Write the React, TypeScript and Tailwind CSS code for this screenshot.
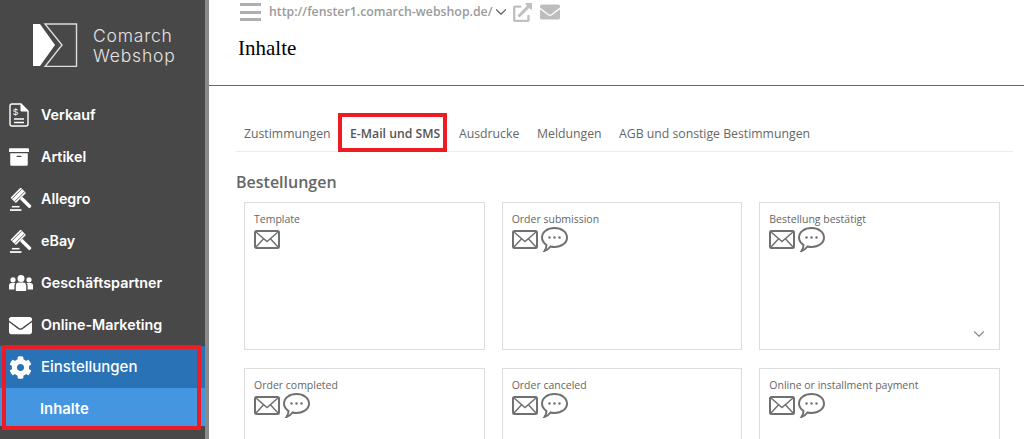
import React from "react";
import { FaArchive, FaCog, FaEnvelope, FaExternalLinkAlt } from "react-icons/fa";
import { ChevronDown } from "lucide-react";

const ReceiptIcon = () => (
  <svg width="20" height="24" viewBox="0 0 20 24" fill="none" stroke="white">
    <path d="M3 1 H12 L19 8 V21 Q19 23 17 23 H3 Q1 23 1 21 V3 Q1 1 3 1Z" strokeWidth="1.4" />
    <path d="M12 1 V8 H19" fill="white" strokeWidth="1" />
    <path d="M5 16 H15 M5 19.5 H15" strokeWidth="1.6" />
    <text x="4" y="12" fontSize="9" fill="white" stroke="none" fontFamily="Liberation Sans, sans-serif">$</text>
  </svg>
);

const GavelIcon = () => (
  <svg width="23" height="23" viewBox="0 0 24 24" fill="white">
    <g transform="rotate(45 10 8)">
      <rect x="5.5" y="0.5" width="8" height="15" rx="0.8" />
      <rect x="13.5" y="6" width="14" height="3.6" rx="1.2" />
      <path d="M7.5 1 V15 M11.5 1 V15" stroke="#484848" strokeWidth="0.8" />
    </g>
    <path d="M1 23 H13" stroke="white" strokeWidth="1.8" />
    <path d="M3 19.5 H11" stroke="white" strokeWidth="1.6" />
  </svg>
);

const UsersIcon = () => (
  <svg width="24" height="16" viewBox="0 0 24 16" fill="white">
    <circle cx="12" cy="3.5" r="3.5" />
    <path d="M6.8 16 V11 Q6.8 7.6 10 7.6 H14 Q17.2 7.6 17.2 11 V16Z" />
    <circle cx="4" cy="4.8" r="2.6" />
    <circle cx="20" cy="4.8" r="2.6" />
    <path d="M0 14.5 V10.5 Q0 8 2.6 8 H6.4 Q5.4 9.2 5.4 11 V14.5Z" />
    <path d="M24 14.5 V10.5 Q24 8 21.4 8 H17.6 Q18.6 9.2 18.6 11 V14.5Z" />
  </svg>
);

const Envelope = () => (
  <svg width="26" height="19" viewBox="0 0 26 19" fill="none" stroke="#707070" strokeWidth="1.5">
    <rect x="1" y="1" width="24" height="17" rx="1.5" strokeWidth="2" />
    <path d="M2 2 L13 11.5 L24 2 M2 17 L9.8 8.6 M24 17 L16.2 8.6" />
  </svg>
);

const Bubble = () => (
  <svg width="27" height="25" viewBox="0 0 27 25" fill="none" stroke="#707070" strokeWidth="2" className="-mt-[3px]">
    <path d="M13.5 1 C20.5 1 26 5 26 10.5 C26 16 20.5 20 13.5 20 C12 20 10.5 19.8 9.5 19.5 C8 21.5 6 23.5 3.5 24 C5 22 5.5 20 5.5 18 C2.8 16 1 13.5 1 10.5 C1 5 6.5 1 13.5 1Z" />
    <circle cx="8.5" cy="10.5" r="1.2" fill="#707070" stroke="none" />
    <circle cx="13.5" cy="10.5" r="1.2" fill="#707070" stroke="none" />
    <circle cx="18.5" cy="10.5" r="1.2" fill="#707070" stroke="none" />
  </svg>
);

const navItems = [
  { label: "Verkauf", icon: <ReceiptIcon /> },
  { label: "Artikel", icon: <FaArchive size={20} /> },
  { label: "Allegro", icon: <GavelIcon /> },
  { label: "eBay", icon: <GavelIcon /> },
  { label: "Geschäftspartner", icon: <UsersIcon /> },
  { label: "Online-Marketing", icon: <FaEnvelope size={23} /> },
];

const cards = [
  { title: "Template", sms: false, chevron: false },
  { title: "Order submission", sms: true, chevron: false },
  { title: "Bestellung bestätigt", sms: true, chevron: true },
  { title: "Order completed", sms: true, chevron: false },
  { title: "Order canceled", sms: true, chevron: false },
  { title: "Online or installment payment", sms: true, chevron: false },
];

const App = () => {
  return (
    <div className="flex h-[439px] w-[1024px] overflow-hidden bg-white font-['Open_Sans',sans-serif]">
      {/* Sidebar */}
      <aside className="w-[209px] shrink-0 bg-[#484848] border-r-4 border-[#8a8a8a] text-white font-['Inter',sans-serif]">
        <div className="h-[94px] flex items-start pt-[23px] pl-[33px] gap-[15px]">
          <svg width="45" height="44" viewBox="33 23 45 44" fill="none">
            <path d="M33 24 H40 L55 45 L40 66 H33Z" fill="white" />
            <path d="M45 24 H76.5 V66.5 H45 L62 45Z" stroke="#dddddd" strokeWidth="1.4" />
          </svg>
          <div className="text-[17.5px] leading-[20px] tracking-[0.8px] font-light text-[#e4e4e4] pt-[3px]">
            Comarch
            <br />
            Webshop
          </div>
        </div>
        <nav>
          {navItems.map((item) => (
            <div key={item.label} className="h-[42px] flex items-center">
              <div className="w-[41px] pl-[9px] flex items-center">{item.icon}</div>
              <span className="text-[14.3px] font-semibold">{item.label}</span>
            </div>
          ))}
          <div className="relative">
            <div className="h-[42px] flex items-center bg-[#2872b5]">
              <div className="w-[41px] pl-[9px] flex items-center">
                <FaCog size={23} />
              </div>
              <span className="text-[15px] font-medium">Einstellungen</span>
            </div>
            <div className="h-[38px] flex items-center pl-[40px] pt-[4px] bg-[#4596e0] text-[14.8px] font-semibold">Inhalte</div>
            <div className="absolute -top-[1px] left-[2px] w-[199px] h-[85px] border-[4px] border-[#ed1c24]" />
          </div>
        </nav>
      </aside>

      {/* Main */}
      <main className="flex-1 min-w-0">
        <header className="h-[86px] border-b border-[#666666] pl-[30px]">
          <div className="h-[24px] flex items-center pl-[1px]">
            <div className="w-[21px] flex flex-col gap-[4.5px]">
              <div className="h-[3px] bg-[#b0b0b0]" />
              <div className="h-[3px] bg-[#b0b0b0]" />
              <div className="h-[3px] bg-[#b0b0b0]" />
            </div>
            <span className="ml-[8px] text-[12.3px] font-semibold text-[#9a9a9a]">http://fenster1.comarch-webshop.de/</span>
            <ChevronDown size={18} strokeWidth={1.6} className="text-[#666666]" />
            <FaExternalLinkAlt size={19} className="text-[#c0c0c0] ml-[3px]" />
            <FaEnvelope size={20} className="text-[#bdbdbd] ml-[8px]" />
          </div>
          <h1 className="mt-[12px] -ml-[1px] text-[21px] leading-[24px] font-['Liberation_Serif',serif] text-black">Inhalte</h1>
        </header>

        <section className="pl-[27px] pr-[11px]">
          <div className="h-[66px] pt-[27px] border-b border-[#ececec] flex items-start text-[12.25px] -mt-0">
            <div className="flex items-center h-[39px] text-[#666666]">
              <span className="ml-[8px] w-[94px] pt-[4px]">Zustimmungen</span>
              <div className="relative w-[109px] h-[39px] pl-[12px] pt-[4px] flex items-center font-semibold text-[#555555]">
                E-Mail und SMS
                <div className="absolute top-0 left-0 w-[109px] h-[39px] border-[4px] border-[#ed1c24]" />
              </div>
              <span className="ml-[12px] w-[78px] pt-[4px]">Ausdrucke</span>
              <span className="w-[82px] pt-[4px]">Meldungen</span>
              <span className="pt-[4px]">AGB und sonstige Bestimmungen</span>
            </div>
          </div>

          <h2 className="mt-[19px] text-[16px] leading-[22px] font-semibold text-[#666666]">Bestellungen</h2>

          <div className="mt-[9px] ml-[8px] grid grid-cols-3 gap-x-[17px] gap-y-[18px] w-[756px]">
            {cards.map((card) => (
              <div key={card.title} className="relative h-[148px] border border-[#dddddd] px-[9px] pt-[9px]">
                <div className="text-[10.5px] leading-[14px] text-[#666666]">{card.title}</div>
                <div className="mt-[4px] flex items-start gap-[3px]">
                  <Envelope />
                  {card.sms && <Bubble />}
                </div>
                {card.chevron && <ChevronDown size={18} strokeWidth={1.5} className="absolute right-[11px] bottom-[6px] text-[#888888]" />}
              </div>
            ))}
          </div>
        </section>
      </main>
    </div>
  );
};

export default App;
